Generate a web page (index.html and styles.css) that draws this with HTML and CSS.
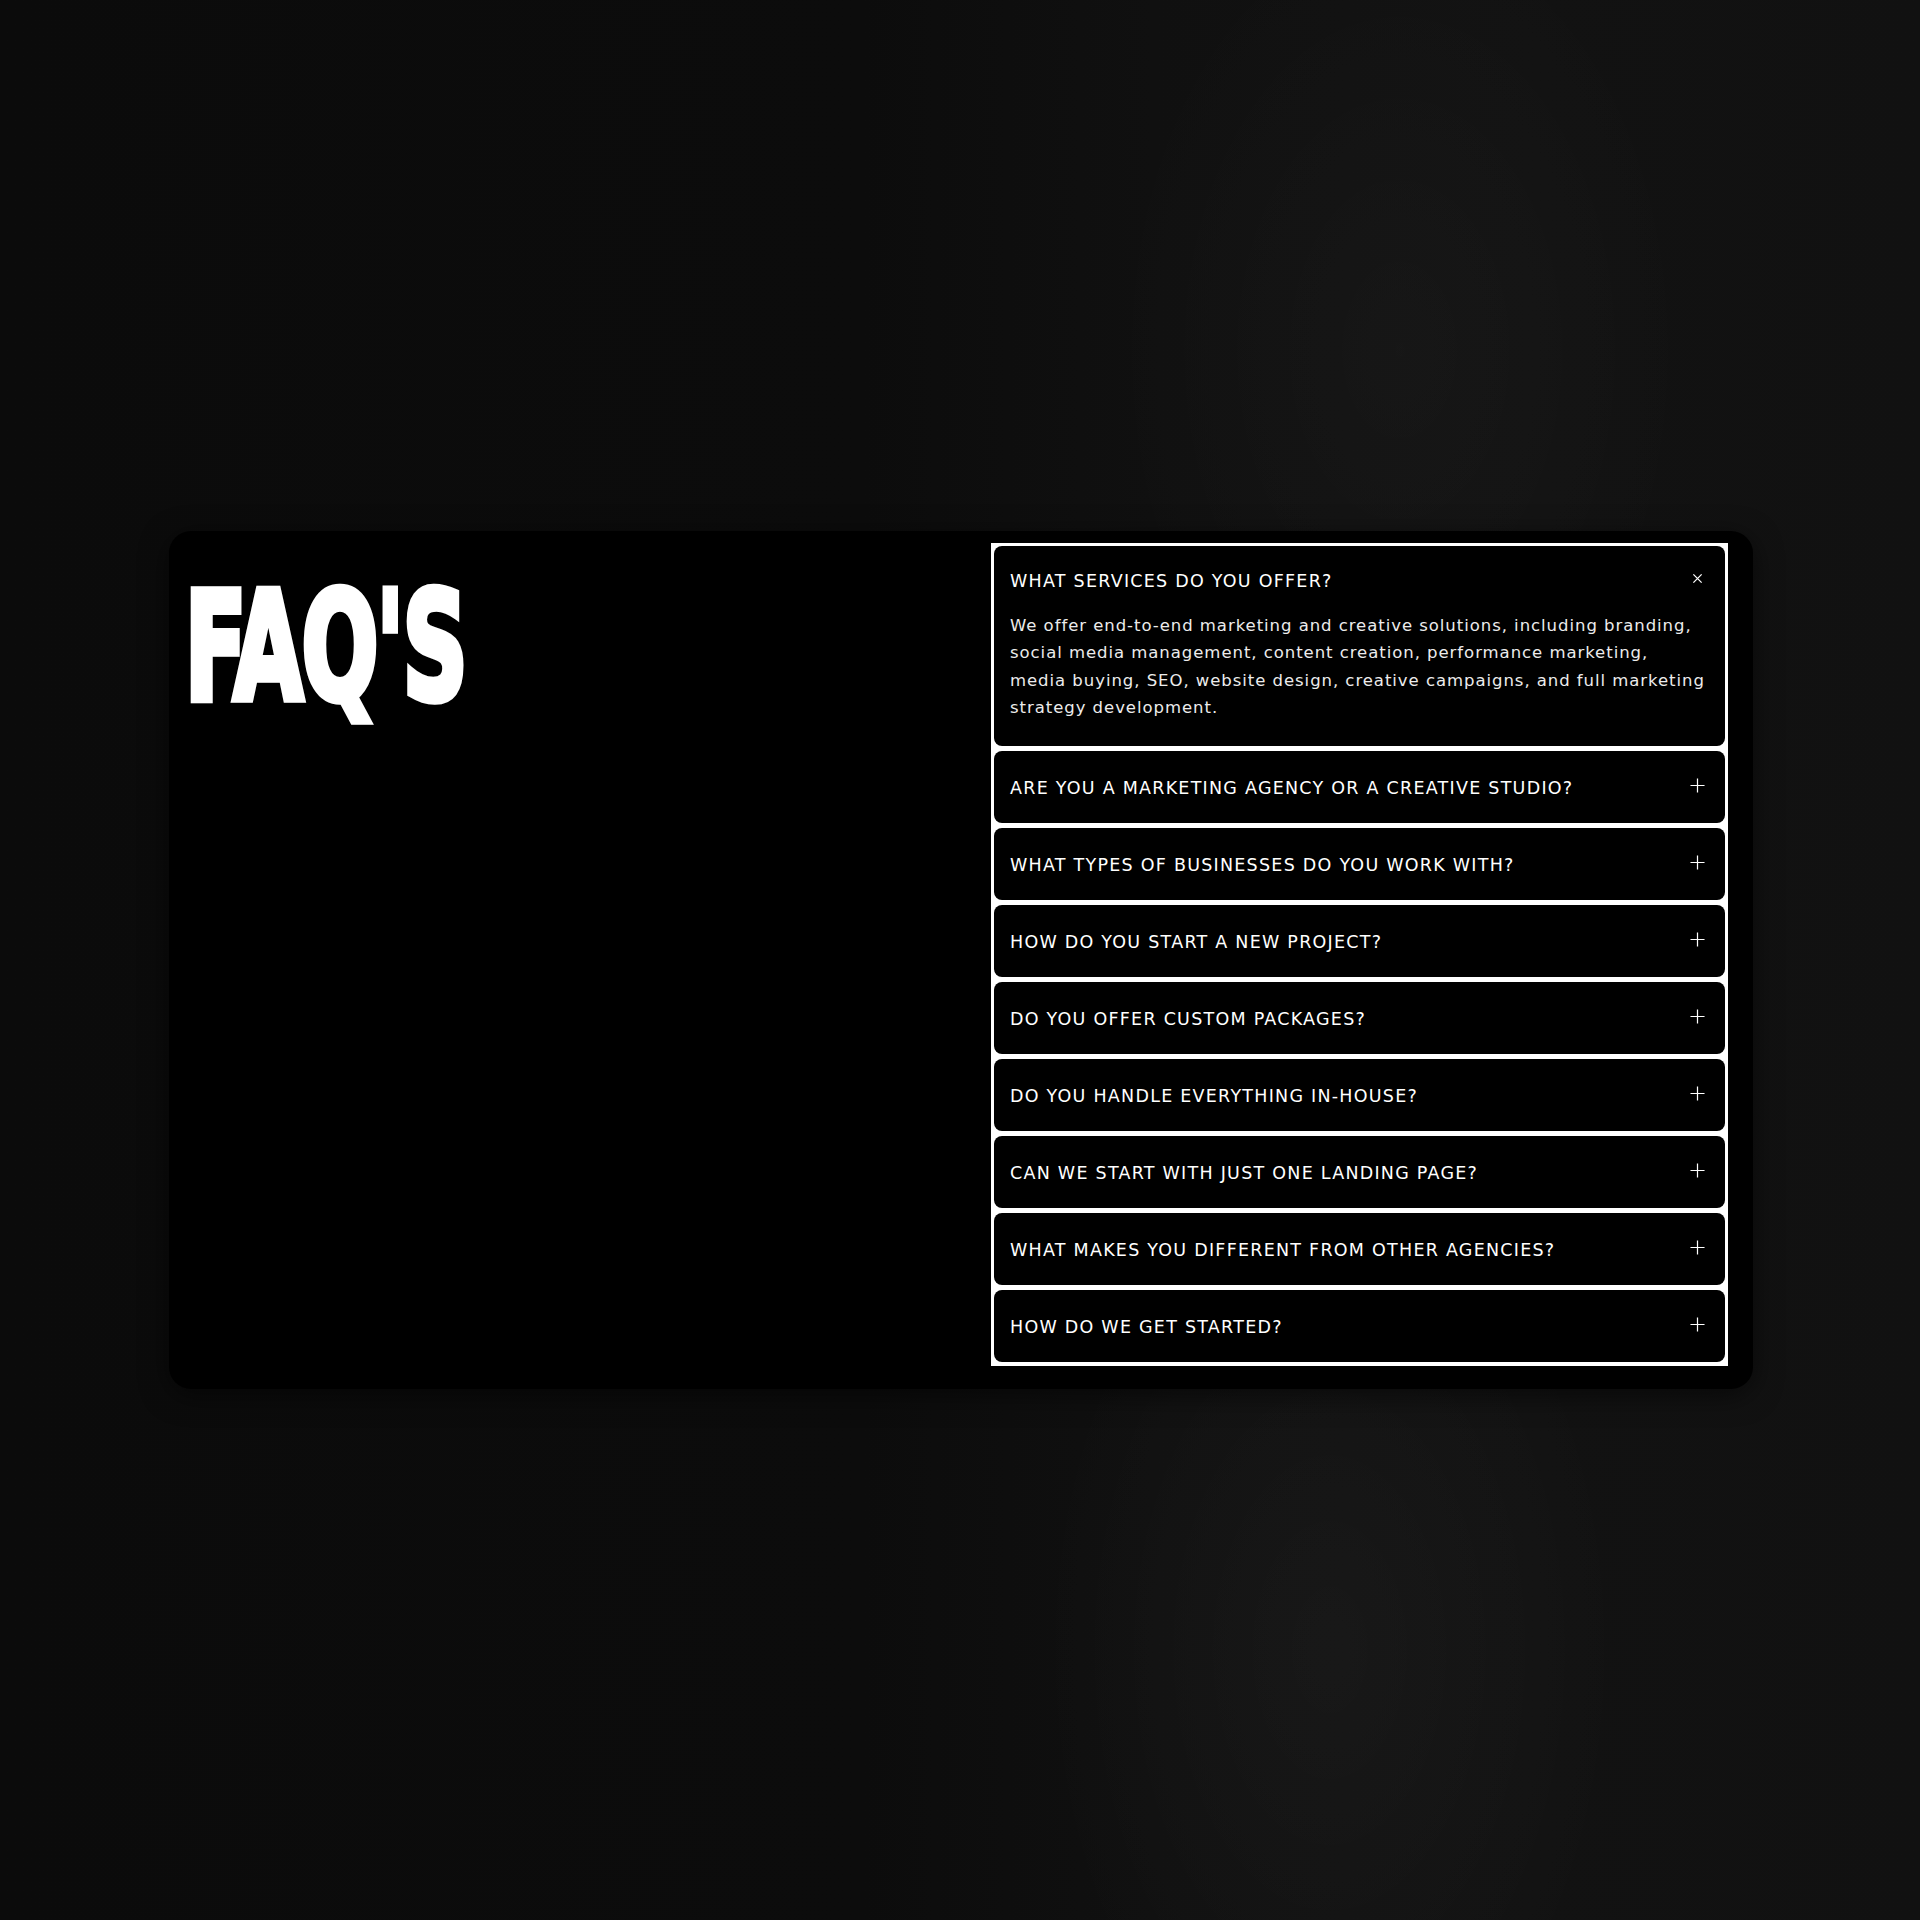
FILE: index.html
```html
<!DOCTYPE html>
<html lang="en">
<head>
<meta charset="utf-8">
<title>FAQ's</title>
<link rel="stylesheet" href="styles.css">
</head>
<body>
<div class="bg">
  <section class="card">
    <div class="intro">
      <h1 class="title"><span class="title-text">FAQ'S</span></h1>
    </div>
    <div class="faq-list">
      <div class="faq open">
        <div class="faq-head">
          <span class="q">WHAT SERVICES DO YOU OFFER?</span>
          <svg class="icon" viewBox="0 0 12 12" width="12" height="12"><path d="M1.5 1.5 L10.5 10.5 M10.5 1.5 L1.5 10.5" stroke="#fff" stroke-width="1.4" fill="none"/></svg>
        </div>
        <p class="a">We offer end-to-end marketing and creative solutions, including branding,<br>social media management, content creation, performance marketing,<br>media buying, SEO, website design, creative campaigns, and full marketing<br>strategy development.</p>
      </div>
      <div class="faq"><div class="faq-head"><span class="q">ARE YOU A MARKETING AGENCY OR A CREATIVE STUDIO?</span><svg class="icon plus" viewBox="0 0 16 16" width="16" height="16"><path d="M8 0.5 V15.5 M0.5 8 H15.5" stroke="#fff" stroke-width="1.3" fill="none"/></svg></div></div>
      <div class="faq"><div class="faq-head"><span class="q">WHAT TYPES OF BUSINESSES DO YOU WORK WITH?</span><svg class="icon plus" viewBox="0 0 16 16" width="16" height="16"><path d="M8 0.5 V15.5 M0.5 8 H15.5" stroke="#fff" stroke-width="1.3" fill="none"/></svg></div></div>
      <div class="faq"><div class="faq-head"><span class="q">HOW DO YOU START A NEW PROJECT?</span><svg class="icon plus" viewBox="0 0 16 16" width="16" height="16"><path d="M8 0.5 V15.5 M0.5 8 H15.5" stroke="#fff" stroke-width="1.3" fill="none"/></svg></div></div>
      <div class="faq"><div class="faq-head"><span class="q">DO YOU OFFER CUSTOM PACKAGES?</span><svg class="icon plus" viewBox="0 0 16 16" width="16" height="16"><path d="M8 0.5 V15.5 M0.5 8 H15.5" stroke="#fff" stroke-width="1.3" fill="none"/></svg></div></div>
      <div class="faq"><div class="faq-head"><span class="q">DO YOU HANDLE EVERYTHING IN-HOUSE?</span><svg class="icon plus" viewBox="0 0 16 16" width="16" height="16"><path d="M8 0.5 V15.5 M0.5 8 H15.5" stroke="#fff" stroke-width="1.3" fill="none"/></svg></div></div>
      <div class="faq"><div class="faq-head"><span class="q">CAN WE START WITH JUST ONE LANDING PAGE?</span><svg class="icon plus" viewBox="0 0 16 16" width="16" height="16"><path d="M8 0.5 V15.5 M0.5 8 H15.5" stroke="#fff" stroke-width="1.3" fill="none"/></svg></div></div>
      <div class="faq"><div class="faq-head"><span class="q">WHAT MAKES YOU DIFFERENT FROM OTHER AGENCIES?</span><svg class="icon plus" viewBox="0 0 16 16" width="16" height="16"><path d="M8 0.5 V15.5 M0.5 8 H15.5" stroke="#fff" stroke-width="1.3" fill="none"/></svg></div></div>
      <div class="faq"><div class="faq-head"><span class="q">HOW DO WE GET STARTED?</span><svg class="icon plus" viewBox="0 0 16 16" width="16" height="16"><path d="M8 0.5 V15.5 M0.5 8 H15.5" stroke="#fff" stroke-width="1.3" fill="none"/></svg></div></div>
    </div>
  </section>
</div>
</body>
</html>
```
FILE: styles.css
```css
* { box-sizing: border-box; }
html, body { margin: 0; padding: 0; }
body {
  background: #0d0d0d;
  font-family: "DejaVu Sans", "Liberation Sans", sans-serif;
  color: #fff;
}
.bg {
  min-height: 1920px;
  padding: 531px 167px 0 169px;
  background:
    radial-gradient(ellipse 420px 700px at 1330px 1650px, rgba(255,255,255,0.03), rgba(255,255,255,0) 70%),
    radial-gradient(ellipse 420px 650px at 1400px 350px, rgba(255,255,255,0.025), rgba(255,255,255,0) 70%),
    linear-gradient(90deg, #0b0b0b 0%, #0c0c0c 45%, #101010 60%, #121212 80%, #111 100%);
}
.card {
  width: 1584px;
  height: 858px;
  background: #000;
  border-radius: 22px;
  box-shadow: 0 6px 28px rgba(0,0,0,0.55);
  display: grid;
  grid-template-columns: 1fr 737px;
  padding: 12px 25px 23px 12px;
}
.intro { padding-top: 30px; }
.title {
  margin: 0;
  font-family: "DejaVu Sans Condensed", "DejaVu Sans", sans-serif;
  font-weight: 700;
  font-size: 100px;
  line-height: 1;
  letter-spacing: -1.5px;
}
.title-text {
  display: inline-block;
  transform: scale(1, 1.5);
  transform-origin: 0 0;
  -webkit-text-stroke: 5px #fff;
  padding-left: 4px;
}
.faq-list {
  background: #fff;
  padding: 3px;
  display: flex;
  flex-direction: column;
  gap: 5px;
  height: 823px;
}
.faq {
  background: #000;
  border-radius: 8px;
  padding: 0 20px 0 16px;
  min-height: 72px;
  display: flex;
  flex-direction: column;
  justify-content: center;
}
.faq.open {
  min-height: 200px;
  justify-content: flex-start;
  padding-top: 22px;
}
.faq-head {
  display: flex;
  align-items: center;
  justify-content: space-between;
  height: 24px;
}
.q {
  font-size: 17.5px;
  letter-spacing: 1.25px;
  line-height: 24px;
  color: #fff;
  padding-top: 2px;
}
.icon { flex: none; display: block; margin-top: -4px; }
.faq.open .icon { width: 11px; height: 11px; margin-right: 2px; }
.plus { width: 15px; height: 15px; }
.a {
  margin: 20px 0 0;
  font-size: 16.5px;
  line-height: 27.3px;
  letter-spacing: 0.95px;
  color: #ececec;
  white-space: nowrap;
}
```
